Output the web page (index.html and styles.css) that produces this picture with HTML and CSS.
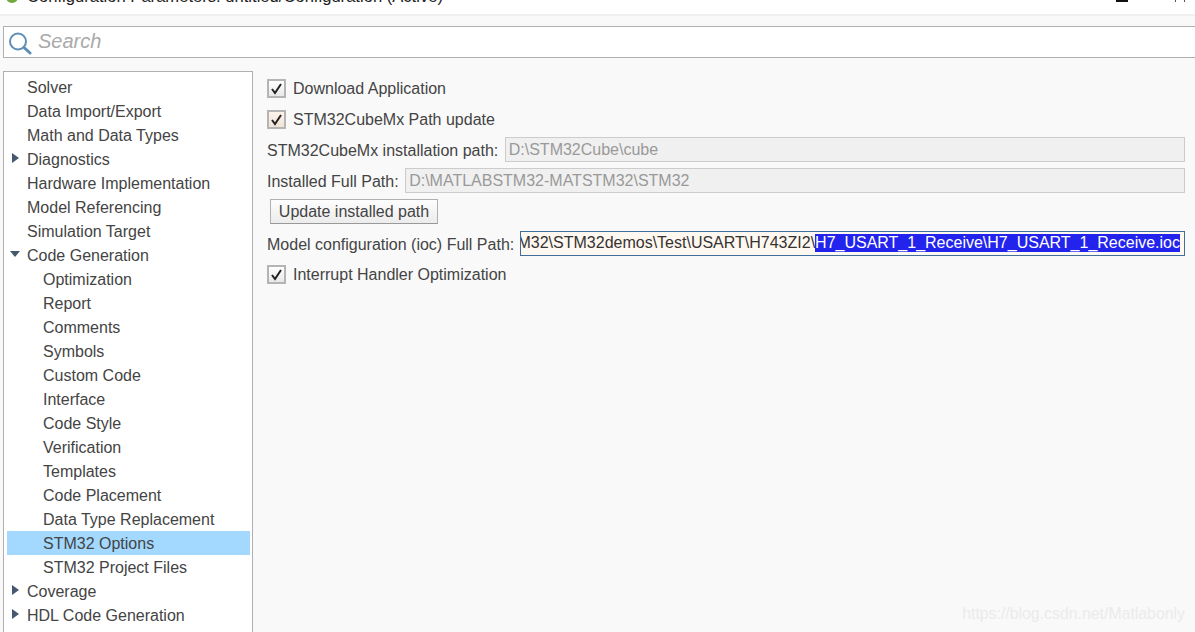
FILE: index.html
```html
<!DOCTYPE html>
<html lang="en">
<head>
    <meta charset="UTF-8">
    <title>Configuration Parameters</title>
    <link rel="stylesheet" href="styles.css">
</head>
<body>
    <div class="titlebar">
        <svg class="app-icon" width="14" height="14" viewBox="0 0 14 14"><circle cx="7" cy="7" r="6" fill="#6fa83c"/><circle cx="7" cy="7" r="2" fill="#c9dfa8"/></svg>
        <span class="title-text">Configuration Parameters: untitled/Configuration (Active)</span>
        <span class="win-min"></span>
        <span class="win-max"></span>
    </div>
    <div class="searchbar">
        <svg class="search-icon" width="24" height="26" viewBox="0 0 24 26">
            <circle cx="9" cy="12.5" r="8" fill="none" stroke="#5f8db5" stroke-width="2"/>
            <path d="M15 18.5 L21 24" stroke="#5f8db5" stroke-width="3" stroke-linecap="round"/>
        </svg>
        <span class="search-text">Search</span>
    </div>
    <div class="main">
        <ul class="tree">
            <li class="row">Solver</li>
            <li class="row">Data Import/Export</li>
            <li class="row">Math and Data Types</li>
            <li class="row"><span class="arrow-right"></span>Diagnostics</li>
            <li class="row">Hardware Implementation</li>
            <li class="row">Model Referencing</li>
            <li class="row">Simulation Target</li>
            <li class="row"><span class="arrow-down"></span>Code Generation</li>
            <li class="row sub">Optimization</li>
            <li class="row sub">Report</li>
            <li class="row sub">Comments</li>
            <li class="row sub">Symbols</li>
            <li class="row sub">Custom Code</li>
            <li class="row sub">Interface</li>
            <li class="row sub">Code Style</li>
            <li class="row sub">Verification</li>
            <li class="row sub">Templates</li>
            <li class="row sub">Code Placement</li>
            <li class="row sub">Data Type Replacement</li>
            <li class="row sub selected">STM32 Options</li>
            <li class="row sub">STM32 Project Files</li>
            <li class="row"><span class="arrow-right"></span>Coverage</li>
            <li class="row"><span class="arrow-right"></span>HDL Code Generation</li>
        </ul>
        <div class="content">
            <div class="check-row">
                <span class="checkbox"><svg width="15" height="15" viewBox="0 0 15 15"><path d="M3 8 L6 12 L12 3" fill="none" stroke="#222" stroke-width="2"/></svg></span>
                Download Application
            </div>
            <div class="check-row second">
                <span class="checkbox tinted"><svg width="15" height="15" viewBox="0 0 15 15"><path d="M3 8 L6 12 L12 3" fill="none" stroke="#222" stroke-width="2"/></svg></span>
                STM32CubeMx Path update
            </div>
            <div class="field-row first-field">
                <label class="field-label">STM32CubeMx installation path:</label>
                <div class="field disabled">D:\STM32Cube\cube</div>
            </div>
            <div class="field-row next-field">
                <label class="field-label">Installed Full Path:</label>
                <div class="field disabled">D:\MATLABSTM32-MATSTM32\STM32</div>
            </div>
            <button class="btn">Update installed path</button>
            <div class="field-row ioc-row">
                <label class="field-label">Model configuration (ioc) Full Path:</label>
                <div class="field active"><span class="path-plain">\STM32\STM32demos\Test\USART\H743ZI2\</span><span class="path-selected">H7_USART_1_Receive\H7_USART_1_Receive.ioc</span></div>
            </div>
            <div class="check-row last">
                <span class="checkbox"><svg width="15" height="15" viewBox="0 0 15 15"><path d="M3 8 L6 12 L12 3" fill="none" stroke="#222" stroke-width="2"/></svg></span>
                Interrupt Handler Optimization
            </div>
            <div class="watermark">https://blog.csdn.net/Matlabonly</div>
        </div>
    </div>
</body>
</html>
```

FILE: styles.css
```css
html, body {
    margin: 0;
    height: 632px;
    overflow: hidden;
}

body {
    font-family: "Liberation Sans", Arial, sans-serif;
    font-size: 16px;
    color: #444;
    background-color: #f9f9f9;
}

.titlebar {
    height: 14px;
    background-color: #fff;
    border-bottom: 2px solid #f0f0f0;
    overflow: hidden;
    display: flex;
    align-items: flex-end;
    position: relative;
}

.app-icon {
    margin: 0 0 10px 5px;
    flex: none;
}

.title-text {
    margin-left: 8px;
    font-size: 16.6px;
    line-height: 22px;
    margin-bottom: 6px;
    color: #222;
    white-space: nowrap;
}

.win-min {
    position: absolute;
    left: 1116px;
    top: 0;
    width: 12px;
    height: 2px;
    background-color: #111;
}

.win-max {
    position: absolute;
    left: 1175px;
    top: 0;
    width: 10px;
    height: 2px;
    border-left: 1px solid #555;
    border-right: 1px solid #555;
    box-sizing: border-box;
}

.searchbar {
    height: 30px;
    margin: 10px 0 0 3px;
    border: 1px solid #b0b0b0;
    border-right: none;
    background-color: #fff;
    display: flex;
    align-items: center;
}

.search-icon {
    margin-left: 5px;
    flex: none;
}

.search-text {
    margin-left: 5px;
    margin-top: -2px;
    font-size: 20px;
    font-style: italic;
    color: #aaa;
}

.main {
    display: flex;
    margin: 13px 0 0 3px;
}

.tree {
    list-style: none;
    width: 250px;
    height: 570px;
    margin: 0;
    padding: 3px 2px 0 3px;
    box-sizing: border-box;
    background-color: #fff;
    border: 1px solid #b0b0b0;
    flex: none;
}

.row {
    height: 24px;
    line-height: 26px;
    padding-left: 20px;
    position: relative;
    white-space: nowrap;
}

.row.sub {
    padding-left: 36px;
}

.row.selected {
    background-color: #a3d8ff;
}

.arrow-right {
    position: absolute;
    left: 5px;
    top: 6px;
    border-left: 7px solid #44586e;
    border-top: 5px solid transparent;
    border-bottom: 5px solid transparent;
}

.arrow-down {
    position: absolute;
    left: 3px;
    top: 8px;
    border-top: 6px solid #44586e;
    border-left: 5px solid transparent;
    border-right: 5px solid transparent;
}

.content {
    flex: 1;
    min-width: 0;
    padding: 7px 10px 0 14px;
    position: relative;
}

.check-row {
    display: flex;
    align-items: center;
    gap: 7px;
    height: 19px;
    padding-top: 1px;
}

.check-row.second {
    margin-top: 11px;
}

.check-row.last {
    margin-top: 8px;
}

.checkbox {
    width: 15px;
    height: 15px;
    margin-top: -1px;
    border: 2px solid #b4b4b4;
    background: linear-gradient(#fff, #e8e8e8);
    display: flex;
    flex: none;
}

.checkbox.tinted {
    background: linear-gradient(#fdf3e9, #efe4d8);
}

.field-row {
    display: flex;
    align-items: center;
    gap: 6.5px;
}

.field-row.first-field {
    margin-top: 8px;
}

.field-row.next-field {
    margin-top: 6px;
}

.field-row.ioc-row {
    margin-top: 7px;
    gap: 5.5px;
}

.field-label {
    padding-top: 2px;
    white-space: nowrap;
    flex: none;
}

.field {
    flex: 1;
    min-width: 0;
    height: 25px;
    box-sizing: border-box;
    line-height: 23px;
    padding-left: 3px;
    white-space: nowrap;
    overflow: hidden;
}

.field.disabled {
    background-color: #f0f0f0;
    border: 1px solid #ccc;
    color: #999;
}

.field.active {
    display: flex;
    justify-content: flex-end;
    align-items: center;
    padding: 0 4px 0 0;
    background-color: #fff8f0;
    border: 1px solid #3f6e9e;
    color: #333;
}

.path-plain,
.path-selected {
    flex: none;
    line-height: 18px;
    margin-bottom: 2px;
}

.path-selected {
    background-color: #2323ee;
    color: #fff;
}

.btn {
    display: block;
    margin: 6px 0 0 3px;
    width: 168px;
    height: 25px;
    padding: 0;
    font: inherit;
    color: #444;
    background: linear-gradient(#fdfdfd, #ececec);
    border: 1px solid #b0b0b0;
    border-bottom-color: #999;
}

.watermark {
    position: absolute;
    right: 10px;
    top: 534px;
    font-size: 15.85px;
    color: #ebebeb;
}
```
